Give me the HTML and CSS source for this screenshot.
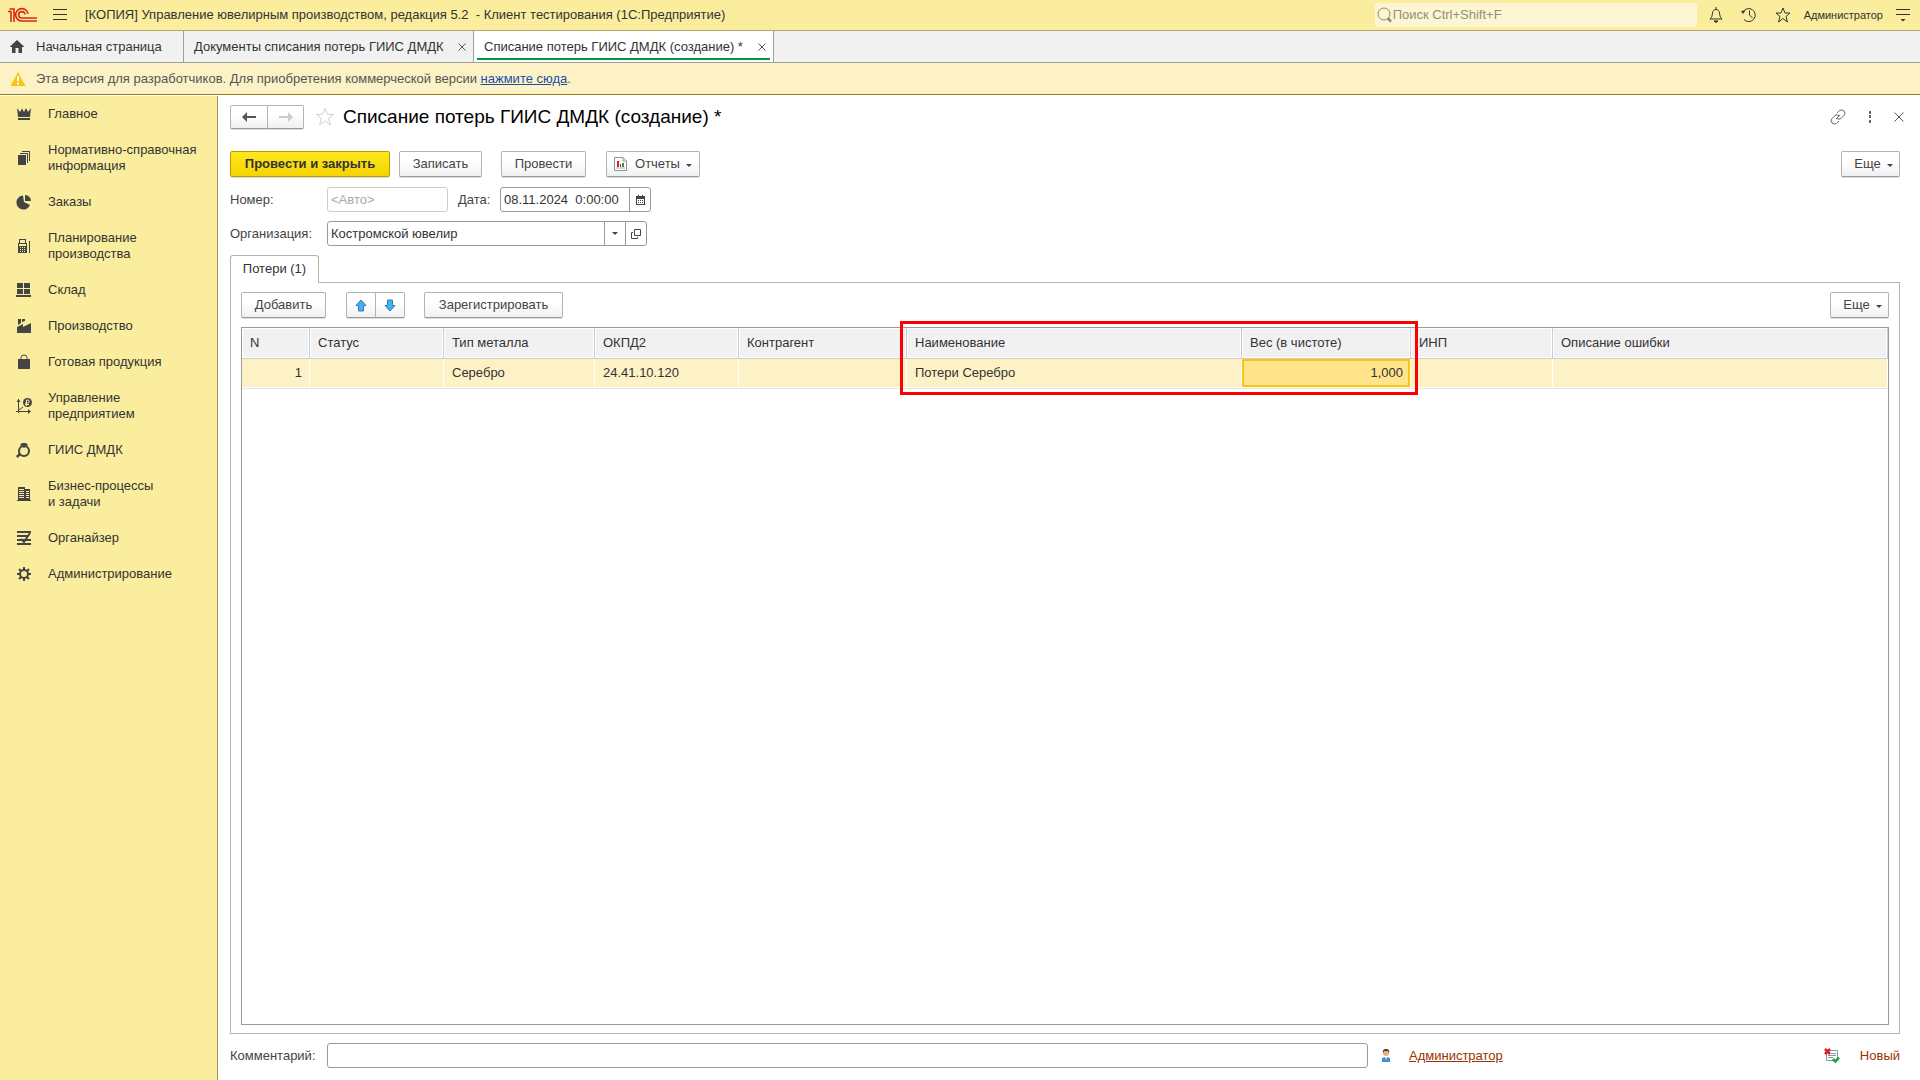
FILE: index.html
```html
<!DOCTYPE html>
<html lang="ru">
<head>
<meta charset="utf-8">
<title>Списание потерь ГИИС ДМДК (создание) *</title>
<link rel="stylesheet" href="styles.css">
</head>
<body>
<div class="app">
  <header class="topbar">
    <svg class="logo" width="30" height="16" viewBox="0 0 30 16" fill="none" stroke="#d9261c" stroke-width="1.600"><path d="M1 4.500H4V15M2.500 2H7V15M21 7A6.200 6.200 0 1 0 15 14H30M18 7.500A3.200 3.200 0 1 0 15 11H30"/></svg>
    <button class="icon-btn menu-btn" aria-label="Меню"><svg width="14" height="14" viewBox="0 0 14 14" stroke="#333" stroke-width="1"><path d="M0 1.500H14M0 6.500H14M0 11.500H14"/></svg></button>
    <span class="app-title">[КОПИЯ] Управление ювелирным производством, редакция 5.2&nbsp; - Клиент тестирования (1С:Предприятие)</span>
    <label class="search">
      <svg width="16" height="16" viewBox="0 0 16 16" fill="none" stroke="#8f8a68"><circle cx="7" cy="7" r="6"/><path d="M10.500 11 14 14.500" stroke-width="2.500"/></svg>
      <input type="search" placeholder="Поиск Ctrl+Shift+F" aria-label="Поиск">
    </label>
    <button class="icon-btn" aria-label="Уведомления"><svg width="14" height="16" viewBox="0 0 14 16" fill="none" stroke="#333"><path d="M1 12C3 10 3 9 3.500 6 4 3.500 5 2.500 7 2.500S10 3.500 10.500 6C11 9 11 10 13 12Z"/><path d="M6 1H8M5 14H9L7 15.500Z" fill="#333"/></svg></button>
    <button class="icon-btn" aria-label="История"><svg width="16" height="16" viewBox="0 0 16 16" fill="none" stroke="#333"><path d="M2 5A6.500 6.500 0 1 1 3 12.500M8.500 3.500V8L11.500 11"/><path d="M0 4 4.500 3.500 2 7Z" fill="#333" stroke="none"/></svg></button>
    <button class="icon-btn" aria-label="Избранное"><svg width="16" height="16" viewBox="0 0 16 16" fill="none" stroke="#333"><path d="M8 1 10 6H15L11 9.500 12.500 15 8 11.500 3.500 15 5 9.500 1 6H6Z"/></svg></button>
    <a class="user" href="#">Администратор</a>
    <button class="icon-btn service-btn" aria-label="Сервис"><svg width="14" height="14" viewBox="0 0 14 14" stroke="#333"><path d="M0 1.500H14M0 6.500H14"/><path d="M4.500 11H9.500L7 13.500Z" fill="#333" stroke="none"/></svg></button>
  </header>

  <nav class="tabs">
    <a class="tab home" href="#"><svg width="14" height="13" viewBox="0 0 14 13" fill="#444"><path d="M7 0 14 6.500V7H12V13H8.500V8H5.500V13H2V7H0V6.500Z"/></svg>Начальная страница</a>
    <div class="tab list"><a href="#">Документы списания потерь ГИИС ДМДК</a><button class="close" aria-label="Закрыть"><svg width="8" height="8" viewBox="0 0 8 8" stroke="#555"><path d="M.5.5 7.500 7.500M7.500.5.500 7.500"/></svg></button></div>
    <div class="tab active"><a href="#">Списание потерь ГИИС ДМДК (создание) *</a><button class="close" aria-label="Закрыть"><svg width="8" height="8" viewBox="0 0 8 8" stroke="#555"><path d="M.5.5 7.500 7.500M7.500.5.500 7.500"/></svg></button></div>
  </nav>

  <div class="banner">
    <svg width="16" height="14" viewBox="0 0 16 14"><path d="M8 0 15.500 14H.5Z" fill="#f9c515"/><path d="M8 4V9M8 10.500V12.500" stroke="#fff" stroke-width="2"/></svg>
    <span>Эта версия для разработчиков. Для приобретения коммерческой версии <a href="#">нажмите сюда</a>.</span>
  </div>

  <div class="body">
    <nav class="sidebar">
      <a href="#"><svg viewBox="0 0 16 16"><path d="M1 2 4 6 6 2.500 8 6 10 2 12 6 15 2 14 11H2ZM2 12H14V14H2Z"/></svg>Главное</a>
      <a href="#"><svg viewBox="0 0 16 16"><path d="M2 5H10V15H2ZM4 3H12V13H11V4H4ZM6 1H14V11H13V2H6Z"/></svg>Нормативно-справочная информация</a>
      <a href="#"><svg viewBox="0 0 16 16"><path d="M7 1.500A7 7 0 1 0 14 11L8 8ZM9 1A6 6 0 0 1 15 7H9Z"/></svg>Заказы</a>
      <a href="#"><svg viewBox="0 0 16 16"><path fill-rule="evenodd" d="M2 5H3V1H10V5H11V15H2ZM4 2V5H9V2ZM3 6V8H10V6ZM4 9V10H5V9ZM6 9V10H7V9ZM8 9V10H9V9ZM4 11V12H5V11ZM6 11V12H7V11ZM8 11V12H9V11ZM4 13V14H5V13ZM6 13V14H7V13ZM8 13V14H9V13ZM13 3H14V15H13Z"/></svg>Планирование<br>производства</a>
      <a href="#"><svg viewBox="0 0 16 16"><path d="M1 1H7V6H1ZM8 1H14V6H8ZM1 7H7V12H1ZM8 7H14V12H8ZM0 13H15V15H0Z"/></svg>Склад</a>
      <a href="#"><svg viewBox="0 0 16 16"><path d="M1 15V9L7 6V9L15 5V15ZM2 1H5V5L2 7ZM6 1H9V3L6 4Z"/></svg>Производство</a>
      <a href="#"><svg viewBox="0 0 16 16"><path d="M2 5H14V15H2Z"/><path class="line" d="M5 7V3.500Q5 1 8 1T11 3.500V7"/></svg>Готовая продукция</a>
      <a href="#"><svg viewBox="0 0 16 16"><circle cx="11.500" cy="4.500" r="4.500"/><path class="cut" d="M10.500 8V2H12.500Q14 3.500 12.500 5H9M9 6.500H13"/><path class="line" d="M2.500 1V15M0 13.500H14M3 12 7 9"/><path d="M.5 4 2.500 1 4.500 4ZM12 11 15 13.500 12 16Z"/></svg>Управление<br>предприятием</a>
      <a href="#"><svg viewBox="0 0 16 16"><circle class="line bold" cx="8" cy="9" r="5"/><path d="M4 3 6 1H10L12 3 8 6ZM0 14 3 11 5 13 1.500 16Z"/></svg>ГИИС ДМДК</a>
      <a href="#"><svg viewBox="0 0 16 16"><path fill-rule="evenodd" d="M2 1H9V3H14V14H15V15H1V14H2ZM3 3V4H8V3ZM3 5V6H8V5ZM3 7V8H8V7ZM3 9V10H8V9ZM3 11V12H8V11ZM10 5V6H13V5ZM10 7V8H13V7ZM10 9V10H13V9ZM10 11V12H13V11Z"/></svg>Бизнес-процессы<br>и задачи</a>
      <a href="#"><svg viewBox="0 0 16 16"><path d="M1 1H15V3H1ZM1 5H12V7H1ZM1 9H15V11H1ZM1 13H15V15H1Z"/><path class="line bold" d="M5 9 8 12 14 3"/></svg>Органайзер</a>
      <a href="#"><svg viewBox="0 0 16 16"><circle class="line bold" cx="8" cy="8" r="4"/><path class="line bold" d="M8 1V4M8 12V15M1 8H4M12 8H15M3 3 5 5M11 11 13 13M3 13 5 11M11 5 13 3"/></svg>Администрирование</a>
    </nav>

    <main class="form">
      <div class="title-row">
        <div class="group">
          <button class="btn nav-btn" aria-label="Назад"><svg width="14" height="10" viewBox="0 0 14 10"><path d="M0 5 5 0V4H14V6H5V10Z" fill="#555"/></svg></button>
          <button class="btn nav-btn" aria-label="Вперед"><svg width="14" height="10" viewBox="0 0 14 10"><path d="M14 5 9 0V4H0V6H9V10Z" fill="#ccc"/></svg></button>
        </div>
        <button class="icon-btn fav" aria-label="В избранное"><svg width="20" height="20" viewBox="0 0 20 20" fill="none" stroke="#d0d0d0"><path d="M10 1.500 12.500 7.500H18.500L13.500 11.500 15.500 18 10 14 4.500 18 6.500 11.500 1.500 7.500H7.500Z"/></svg></button>
        <h1>Списание потерь ГИИС ДМДК (создание) *</h1>
        <div class="title-tools">
          <button class="icon-btn" aria-label="Ссылка"><svg width="16" height="16" viewBox="0 0 16 16" fill="none" stroke="#666"><path d="M7 4 9.500 1.500Q12 0 14 2T14 6.500L11 9.500Q9 11 7 9.500M9 12 6.500 14.500Q4 16 2 14T2 9.500L5 6.500Q7 5 9 6.500M6 10 10 6"/></svg></button>
          <button class="icon-btn" aria-label="Действия"><svg width="4" height="12" viewBox="0 0 4 12" fill="#666"><path d="M1 0H3V3H1ZM1 4H3V7H1ZM1 9H3V12H1Z"/></svg></button>
          <button class="icon-btn" aria-label="Закрыть"><svg width="10" height="10" viewBox="0 0 10 10" stroke="#555"><path d="M.5.5 9.500 9.500M9.500.5.500 9.500"/></svg></button>
        </div>
      </div>

      <div class="toolbar main-toolbar">
        <button class="btn primary">Провести и закрыть</button>
        <button class="btn save">Записать</button>
        <button class="btn post">Провести</button>
        <button class="btn reports"><svg width="14" height="14" viewBox="0 0 14 14"><path d="M.5.5H9L12.500 4V13.500H.5Z" fill="#fff" stroke="#8296aa"/><path d="M9 .5V4H12.500" fill="none" stroke="#8296aa"/><path d="M3 4H5V10H3Z" fill="#e02020"/><path d="M6 7H7V10H6Z" fill="#e02020"/><path d="M8 6H10V10H8Z" fill="#1c9a3c"/><path d="M2 11H11" stroke="#aaa"/></svg>Отчеты<span class="caret"></span></button>
        <button class="btn more">Еще<span class="caret"></span></button>
      </div>

      <div class="field-row">
        <label class="cap" for="num">Номер:</label>
        <input class="text num" id="num" placeholder="&lt;Авто&gt;" disabled>
        <label class="cap-date" for="date">Дата:</label>
        <div class="combo date">
          <input id="date" value="08.11.2024  0:00:00">
          <button aria-label="Календарь"><svg width="9" height="10" viewBox="0 0 9 10"><path fill-rule="evenodd" d="M0 1H2V0H3V1H6V0H7V1H9V10H0ZM1 4V9H8V4ZM2 5H3V6H2ZM4 5H5V6H4ZM6 5H7V6H6ZM2 7H3V8H2ZM4 7H5V8H4ZM6 7H7V8H6Z" fill="#444"/></svg></button>
        </div>
      </div>
      <div class="field-row">
        <label class="cap" for="org">Организация:</label>
        <div class="combo org">
          <input id="org" value="Костромской ювелир">
          <button aria-label="Выбрать"><span class="caret"></span></button>
          <button aria-label="Открыть"><svg width="10" height="10" viewBox="0 0 10 10" fill="none" stroke="#444"><path d="M3.500.5H9.500V6.500H3.500ZM2 3.500H.5V9.500H6.500V8"/></svg></button>
        </div>
      </div>

      <div class="page-tabs"><button class="page-tab">Потери (1)</button></div>
      <section class="panel">
        <div class="toolbar">
          <button class="btn add">Добавить</button>
          <div class="group move">
            <button class="btn" aria-label="Вверх"><svg width="12" height="13" viewBox="0 0 12 13"><path d="M6 1 11 6.500H8.500V12H3.500V6.500H1Z" fill="#45b0f0" stroke="#2c7fb8"/></svg></button>
            <button class="btn" aria-label="Вниз"><svg width="12" height="13" viewBox="0 0 12 13"><path d="M6 12 11 6.500H8.500V1H3.500V6.500H1Z" fill="#45b0f0" stroke="#2c7fb8"/></svg></button>
          </div>
          <button class="btn register">Зарегистрировать</button>
          <button class="btn more">Еще<span class="caret"></span></button>
        </div>
        <div class="grid">
          <table>
            <colgroup><col class="c-n"><col class="c-status"><col class="c-metal"><col class="c-okpd"><col class="c-agent"><col class="c-name"><col class="c-weight"><col class="c-inp"><col></colgroup>
            <thead><tr><th>N</th><th>Статус</th><th>Тип металла</th><th>ОКПД2</th><th>Контрагент</th><th>Наименование</th><th>Вес (в чистоте)</th><th>ИНП</th><th>Описание ошибки</th></tr></thead>
            <tbody><tr><td class="right">1</td><td></td><td>Серебро</td><td>24.41.10.120</td><td></td><td>Потери Серебро</td><td class="right current">1,000</td><td></td><td></td></tr></tbody>
          </table>
          <div class="highlight"></div>
        </div>
      </section>

      <footer class="footer">
        <label class="cap" for="comment">Комментарий:</label>
        <input class="text comment" id="comment">
        <svg class="person" width="10" height="14" viewBox="0 0 10 14"><path d="M1 13V10Q1 8 5 8T9 10V13Z" fill="#3d8fd0"/><path d="M4 8H6L5 11Z" fill="#fff"/><circle cx="5" cy="4" r="3" fill="#e8b070"/><path d="M2 4Q1 0 5 0T8 4L7 2H3Z" fill="#4a3a30"/></svg>
        <a class="author" href="#">Администратор</a>
        <svg class="state-icon" width="16" height="16" viewBox="0 0 16 16"><path d="M2.500 2.500H13.500V12.500H2.500Z" fill="#fff" stroke="#8296aa"/><path d="M7 5.500H12M4 7.500H12M4 9.500H9" stroke="#8296aa"/><path d="M1 1 6 6M6 1 1 6" stroke="#d92020" stroke-width="2.500"/><path d="M9 11 11.500 13.500 15 9.500" fill="none" stroke="#18a035" stroke-width="2.500"/></svg>
        <span class="state">Новый</span>
      </footer>
    </main>
  </div>
</div>
</body>
</html>
```
FILE: styles.css
```css
* { box-sizing: border-box; }
body { margin: 0; background: #fff; color: #333; font: 13px/16px "Liberation Sans", Arial, sans-serif; }
button, input { font: inherit; color: inherit; }
button { padding: 0; cursor: pointer; }
svg { display: block; flex: none; }
.app { display: flex; flex-direction: column; min-height: 100vh; }

.icon-btn { display: flex; align-items: center; justify-content: center; border: 0; background: none; }

.topbar { display: flex; align-items: center; height: 31px; padding: 0 10px 0 7px; background: #fbed9e; border-bottom: 1px solid #b0a86e; }
.app-title { flex: 1; }
.search { display: flex; align-items: center; width: 322px; height: 24px; padding-left: 2px; margin-right: 12px; border-radius: 2px; background: #fdf6d3; }
.search input { flex: 1; min-width: 0; padding: 0; border: 0; background: none; outline: 0; }
.search input::placeholder { color: #938f7a; opacity: 1; }
.topbar .icon-btn { margin-right: 18px; }
.topbar .menu-btn { margin: 0 18px 0 16px; }
.topbar .service-btn { margin: 0 0 0 13px; }
.user { margin-left: -5px; font-size: 11px; color: #333; text-decoration: none; }

.tabs { display: flex; height: 32px; background: #f1f1f1; border-bottom: 1px solid #9f9f9f; }
.tab { display: flex; align-items: center; justify-content: space-between; padding: 0 7px 0 10px; border-right: 1px solid #9f9f9f; color: #333; text-decoration: none; }
.tab a { color: inherit; text-decoration: none; }
.tab.home { width: 184px; justify-content: flex-start; gap: 12px; }
.tab.list { width: 290px; }
.tab.active { width: 300px; background: linear-gradient(#009646, #009646) center bottom 2px / calc(100% - 6px) 2px no-repeat #fff; }
.close { border: 0; background: none; }

.banner { display: flex; align-items: center; gap: 10px; height: 32px; padding: 0 10px; background: #fdf2c6; border-bottom: 1px solid #9a7b14; color: #555; }
.banner a { color: #1a4fa8; }

.body { display: flex; flex: 1; padding-top: 1px; }
.sidebar { flex: none; width: 218px; background: #fbed9e; border-right: 1px solid #9d9560; }
.sidebar a { display: grid; grid-template-columns: 16px 1fr; column-gap: 16px; align-items: center; padding: 10px 10px 10px 16px; color: #333; text-decoration: none; }
.sidebar svg { width: 16px; height: 16px; fill: #444; grid-row: 1 / 3; }
.sidebar .line { fill: none; stroke: #444; }
.sidebar .cut { fill: none; stroke: #fbed9e; }
.sidebar .bold { stroke-width: 2px; }

.form { flex: 1; min-width: 0; display: flex; flex-direction: column; padding: 9px 20px 12px 12px; color: #444; }

.btn { display: flex; align-items: center; justify-content: center; height: 26px; padding: 0 12px; border: 1px solid #b3b3b3; border-bottom-color: #999; border-radius: 2px; background: linear-gradient(#fff 40%, #f0f0f0); box-shadow: 0 1px 0 #ddd; white-space: nowrap; }
.group { display: flex; }
.group .btn + .btn { margin-left: -1px; border-radius: 0 2px 2px 0; }
.group .btn:first-child { border-radius: 2px 0 0 2px; }
.caret { width: 0; height: 0; border: 3px solid transparent; border-top-color: #444; border-bottom: 0; }
.btn .caret { margin: 3px 0 0 6px; }

.title-row { display: flex; align-items: center; height: 24px; margin-bottom: 22px; }
.nav-btn { width: 38px; height: 24px; padding: 0; }
.group .nav-btn + .nav-btn { width: 37px; }
.fav { margin: 0 8px 0 11px; }
h1 { margin: 0; font-size: 19px; line-height: 24px; font-weight: 400; color: #000; }
.title-tools { display: flex; align-items: center; gap: 22px; margin: 0 -4px 0 auto; }

.toolbar { display: flex; align-items: center; }
.primary { width: 160px; margin-right: 9px; border-color: #b39b00; background: linear-gradient(#ffe81f, #f5d400); font-weight: 700; color: #333; }
.save { width: 83px; margin-right: 19px; }
.post { width: 85px; margin-right: 20px; }
.reports { width: 94px; padding: 0; }
.reports svg { margin-right: 7px; }
.more { width: 59px; margin-left: auto; padding: 0 0 0 6px; }
.main-toolbar { margin-bottom: 10px; }

.field-row { display: flex; align-items: center; margin-bottom: 9px; }
.cap { flex: none; width: 97px; }
.text, .combo { height: 25px; border: 1px solid #999; border-radius: 3px; background: #fff; }
.text { padding: 0 3px; }
.num { width: 121px; border-color: #ccc; }
.num::placeholder { color: #aaa; opacity: 1; }
.cap-date { width: 52px; padding-left: 10px; }
.combo { display: flex; }
.combo input { flex: 1; min-width: 0; padding: 0 3px; border: 0; background: none; outline: 0; color: #333; white-space: pre; }
.combo button { display: flex; align-items: center; justify-content: center; width: 21px; border: 0; border-left: 1px solid #999; background: none; }
.date { width: 151px; }
.org { width: 320px; }

.page-tabs { display: flex; }
.page-tab { position: relative; z-index: 1; width: 89px; height: 28px; margin-bottom: -1px; padding-bottom: 2px; border: 1px solid #b3b3b3; border-bottom: 0; border-radius: 3px 3px 0 0; background: #fff; color: #333; }
.panel { flex: 1; display: flex; flex-direction: column; padding: 9px 10px 8px; border: 1px solid #b3b3b3; }
.add { width: 85px; }
.move { margin: 0 19px 0 20px; }
.move .btn { width: 30px; padding: 0; }
.register { width: 139px; }

.grid { position: relative; flex: 1; margin-top: 9px; border: 1px solid #999; }
table { width: 100%; table-layout: fixed; border-collapse: separate; border-spacing: 0; color: #333; }
th, td { padding: 0 8px; text-align: left; font-weight: 400; white-space: nowrap; }
th { height: 31px; border-right: 1px solid #ccc; border-bottom: 1px solid #ccc; background: #f1f1f1; box-shadow: inset 0 0 0 1px #fff; }
td { height: 29px; border-right: 1px solid #fff; border-bottom: 1px solid #fff; background: #fdf2c6; }
tbody tr { box-shadow: 0 1px 0 #e5e5e5; }
td.right { padding-right: 7px; text-align: right; }
.current { background: linear-gradient(#ffe48c, #ffe48c) content-box; background: #ffe48c; box-shadow: inset 0 0 0 2px #f9c515; }
.c-n { width: 68px; }
.c-status { width: 134px; }
.c-metal { width: 151px; }
.c-okpd { width: 144px; }
.c-agent { width: 168px; }
.c-name { width: 335px; }
.c-weight { width: 169px; }
.c-inp { width: 142px; }
.highlight { position: absolute; left: 658px; top: -7px; width: 518px; height: 74px; border: 3px solid #f00; pointer-events: none; }

.footer { display: flex; align-items: center; margin-top: 9px; }
.comment { width: 1041px; }
.person { margin: 0 18px 0 13px; }
.author { color: #993300; }
.state-icon { margin: 0 20px 0 auto; }
.state { color: #993300; }
```
